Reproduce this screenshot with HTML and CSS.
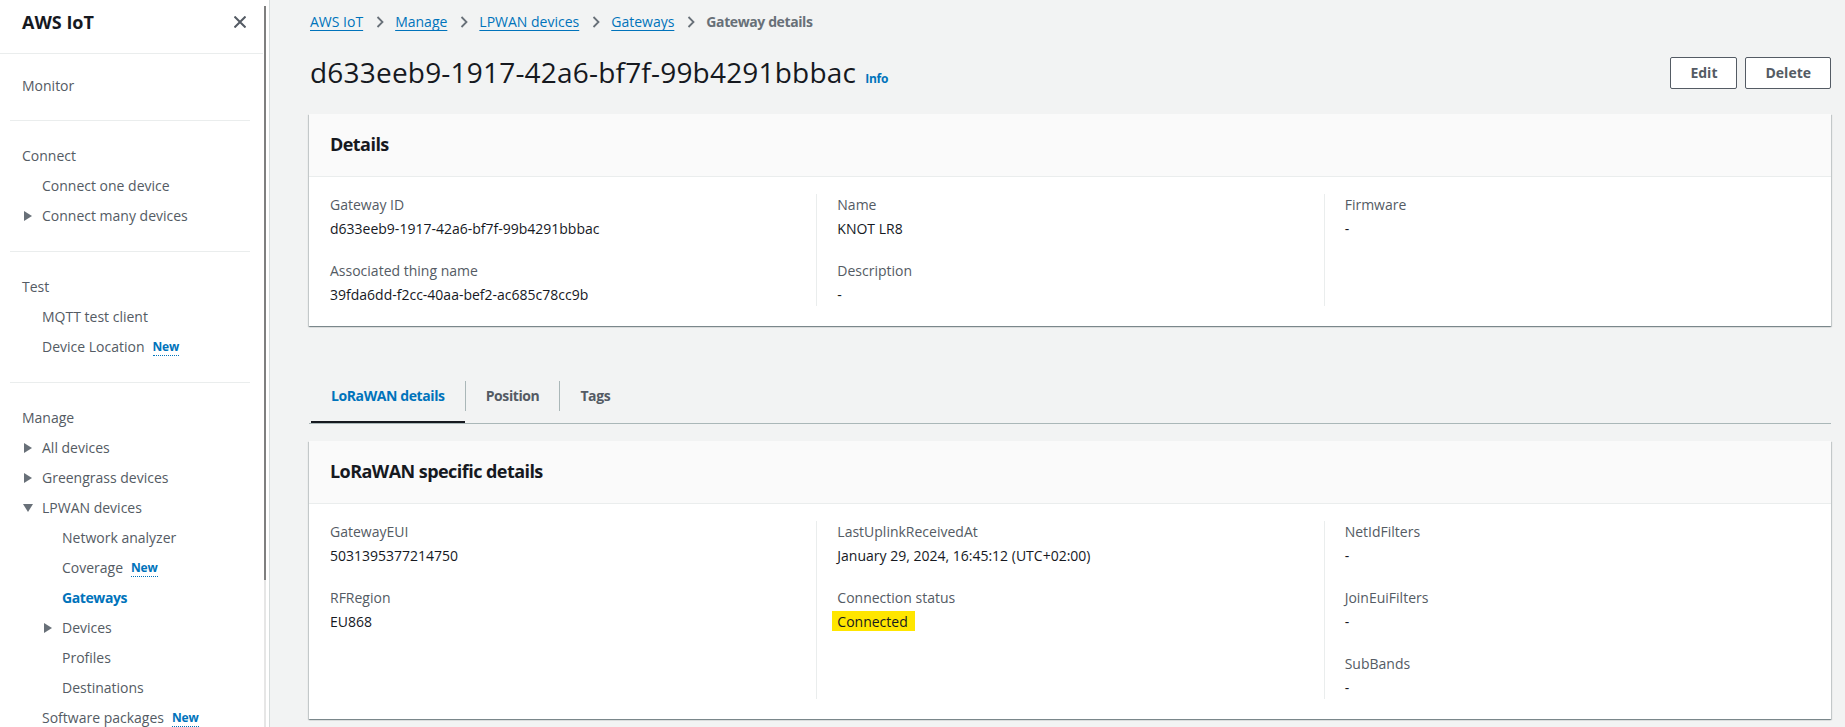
FILE: index.html
```html
<!DOCTYPE html>
<html lang="en">
<head>
<meta charset="utf-8">
<title>Gateway details</title>
<link rel="stylesheet" href="styles.css">
</head>
<body>
<div class="app">
  <aside class="nav">
    <div class="nav-head">
      <span class="nav-title">AWS IoT</span>
      <svg class="close" width="12" height="12" viewBox="0 0 12 12"><path d="M0.5 0.5 L11.5 11.5 M11.5 0.5 L0.5 11.5" stroke="#545b64" stroke-width="2" fill="none"/></svg>
    </div>
    <div class="nav-sec first">
      <div class="nav-h">Monitor</div>
    </div>
    <div class="nav-div"></div>
    <div class="nav-sec">
      <div class="nav-h">Connect</div>
      <div class="nav-i l1">Connect one device</div>
      <div class="nav-i l1"><svg class="caret" width="8" height="10" viewBox="0 0 8 10"><polygon points="0,0 8,5 0,10" fill="#687078"/></svg>Connect many devices</div>
    </div>
    <div class="nav-div"></div>
    <div class="nav-sec">
      <div class="nav-h">Test</div>
      <div class="nav-i l1">MQTT test client</div>
      <div class="nav-i l1">Device Location<span class="new">New</span></div>
    </div>
    <div class="nav-div"></div>
    <div class="nav-sec">
      <div class="nav-h">Manage</div>
      <div class="nav-i l1"><svg class="caret" width="8" height="10" viewBox="0 0 8 10"><polygon points="0,0 8,5 0,10" fill="#687078"/></svg>All devices</div>
      <div class="nav-i l1"><svg class="caret" width="8" height="10" viewBox="0 0 8 10"><polygon points="0,0 8,5 0,10" fill="#687078"/></svg>Greengrass devices</div>
      <div class="nav-i l1"><svg class="caret down" width="10" height="8" viewBox="0 0 10 8"><polygon points="0,0 10,0 5,8" fill="#687078"/></svg>LPWAN devices</div>
      <div class="nav-i l2">Network analyzer</div>
      <div class="nav-i l2">Coverage<span class="new">New</span></div>
      <div class="nav-i l2 active">Gateways</div>
      <div class="nav-i l2"><svg class="caret" width="8" height="10" viewBox="0 0 8 10"><polygon points="0,0 8,5 0,10" fill="#687078"/></svg>Devices</div>
      <div class="nav-i l2">Profiles</div>
      <div class="nav-i l2">Destinations</div>
      <div class="nav-i l1">Software packages<span class="new">New</span></div>
    </div>
    <div class="scroll-track"></div>
    <div class="scroll-thumb"></div>
  </aside>

  <main class="main">
    <nav class="crumbs">
      <a class="crumb">AWS IoT</a>
      <svg class="chev" width="8" height="12" viewBox="0 0 8 12"><path d="M1.5 1 L6.5 6 L1.5 11" stroke="#687078" stroke-width="1.8" fill="none"/></svg>
      <a class="crumb">Manage</a>
      <svg class="chev" width="8" height="12" viewBox="0 0 8 12"><path d="M1.5 1 L6.5 6 L1.5 11" stroke="#687078" stroke-width="1.8" fill="none"/></svg>
      <a class="crumb">LPWAN devices</a>
      <svg class="chev" width="8" height="12" viewBox="0 0 8 12"><path d="M1.5 1 L6.5 6 L1.5 11" stroke="#687078" stroke-width="1.8" fill="none"/></svg>
      <a class="crumb">Gateways</a>
      <svg class="chev" width="8" height="12" viewBox="0 0 8 12"><path d="M1.5 1 L6.5 6 L1.5 11" stroke="#687078" stroke-width="1.8" fill="none"/></svg>
      <span class="crumb-cur">Gateway details</span>
    </nav>

    <div class="page-head">
      <div class="title-wrap">
        <h1 class="title">d633eeb9-1917-42a6-bf7f-99b4291bbbac</h1>
        <a class="info">Info</a>
      </div>
      <div class="actions">
        <button class="btn">Edit</button>
        <button class="btn">Delete</button>
      </div>
    </div>

    <section class="card details">
      <div class="card-head">Details</div>
      <div class="card-body cols">
        <div class="col">
          <div class="field"><div class="label">Gateway ID</div><div class="value">d633eeb9-1917-42a6-bf7f-99b4291bbbac</div></div>
          <div class="field"><div class="label">Associated thing name</div><div class="value">39fda6dd-f2cc-40aa-bef2-ac685c78cc9b</div></div>
        </div>
        <div class="col">
          <div class="field"><div class="label">Name</div><div class="value">KNOT LR8</div></div>
          <div class="field"><div class="label">Description</div><div class="value">-</div></div>
        </div>
        <div class="col">
          <div class="field"><div class="label">Firmware</div><div class="value">-</div></div>
        </div>
      </div>
    </section>

    <div class="tabs">
      <div class="tab active">LoRaWAN details</div>
      <span class="tab-sep"></span>
      <div class="tab">Position</div>
      <span class="tab-sep"></span>
      <div class="tab">Tags</div>
    </div>

    <section class="card lora">
      <div class="card-head">LoRaWAN specific details</div>
      <div class="card-body cols">
        <div class="col">
          <div class="field"><div class="label">GatewayEUI</div><div class="value">5031395377214750</div></div>
          <div class="field"><div class="label">RFRegion</div><div class="value">EU868</div></div>
        </div>
        <div class="col">
          <div class="field"><div class="label">LastUplinkReceivedAt</div><div class="value">January 29, 2024, 16:45:12 (UTC+02:00)</div></div>
          <div class="field"><div class="label">Connection status</div><div class="value"><span class="hl">Connected</span></div></div>
        </div>
        <div class="col">
          <div class="field"><div class="label">NetIdFilters</div><div class="value">-</div></div>
          <div class="field"><div class="label">JoinEuiFilters</div><div class="value">-</div></div>
          <div class="field"><div class="label">SubBands</div><div class="value">-</div></div>
        </div>
      </div>
    </section>
  </main>
</div>
</body>
</html>
```

FILE: styles.css
```css
html, body {
  margin: 0;
  padding: 0;
}
body {
  font-family: "Open Sans", "Liberation Sans", sans-serif;
  font-size: 14px;
  line-height: 22px;
  color: #16191f;
  background: #f2f3f3;
}
.app {
  display: flex;
  height: 727px;
  overflow: hidden;
}

/* ---------- side navigation ---------- */
.nav {
  width: 270px;
  flex: none;
  box-sizing: border-box;
  background: #ffffff;
  border-right: 1px solid #d5dbdb;
  position: relative;
  color: #545b64;
}
.nav-head {
  height: 53px;
  border-bottom: 1px solid #eaeded;
  margin-right: 6px;
  display: flex;
  align-items: center;
  justify-content: space-between;
  padding: 0 17px 0 22px;
}
.nav-title {
  font-size: 18px;
  font-weight: 700;
  color: #16191f;
  margin-top: -9px;
}
.close {
  margin-top: -9px;
}
.nav-sec {
  padding: 20px 0;
}
.nav-sec.first {
  padding-top: 17px;
  padding-bottom: 19px;
}
.nav-div {
  height: 1px;
  background: #eaeded;
  margin-left: 10px;
  width: 240px;
}
.nav-h,
.nav-i {
  height: 30px;
  line-height: 30px;
  display: flex;
  align-items: center;
  white-space: nowrap;
}
.nav-h {
  padding-left: 22px;
}
.nav-i.l1 {
  padding-left: 42px;
}
.nav-i.l2 {
  padding-left: 62px;
}
.nav-i.active {
  color: #0073bb;
  font-weight: 700;
  letter-spacing: -0.4px;
}
.caret {
  margin-left: -18px;
  margin-right: 10px;
  flex: none;
}
.caret.down {
  margin-left: -19px;
  margin-right: 9px;
}
.new {
  font-size: 12px;
  font-weight: 700;
  color: #0073bb;
  margin-left: 8px;
  line-height: 16px;
  border-bottom: 1px dotted #0073bb;
  letter-spacing: -0.2px;
}
.scroll-track {
  position: absolute;
  top: 6px;
  bottom: 0;
  left: 264px;
  width: 2px;
  background: #e6e6e6;
}
.scroll-thumb {
  position: absolute;
  top: 6px;
  left: 264px;
  width: 2px;
  height: 574px;
  background: #7f7f7f;
}

/* ---------- main ---------- */
.main {
  flex: 1;
  min-width: 0;
  padding: 0 14px 0 39px;
}
.crumbs {
  margin-top: 11px;
  height: 22px;
  display: flex;
  align-items: center;
  padding-left: 1px;
}
.crumb {
  color: #0073bb;
  text-decoration: underline;
  text-underline-offset: 3px;
}
.chev {
  margin: 0 11px 0 13px;
  flex: none;
}
.crumb-cur {
  color: #687078;
  font-weight: 700;
  letter-spacing: -0.4px;
}
.page-head {
  margin-top: 21px;
  height: 36px;
  display: flex;
  align-items: center;
  justify-content: space-between;
}
.title-wrap {
  display: flex;
  align-items: baseline;
  padding-left: 1px;
}
.title {
  margin: 0;
  font-size: 28px;
  line-height: 36px;
  font-weight: 400;
  color: #16191f;
  letter-spacing: 0.2px;
}
.info {
  font-size: 12px;
  font-weight: 700;
  color: #0073bb;
  margin-left: 9px;
  letter-spacing: -0.2px;
}
.actions {
  display: flex;
  gap: 8px;
  margin-top: 2px;
}
.btn {
  font-family: inherit;
  font-size: 14px;
  font-weight: 700;
  color: #545b64;
  background: #ffffff;
  border: 1px solid #545b64;
  border-radius: 2px;
  height: 32px;
  padding: 0 19px;
  line-height: 22px;
}

/* ---------- cards ---------- */
.card {
  background: #ffffff;
  box-shadow: 0 1px 1px 0 rgba(0, 28, 36, 0.3), 1px 1px 1px 0 rgba(0, 28, 36, 0.15), -1px 1px 1px 0 rgba(0, 28, 36, 0.15);
}
.card.details {
  margin-top: 24px;
}
.card.lora {
  margin-top: 17px;
}
.card-head {
  background: #fafafa;
  border-bottom: 1px solid #eaeded;
  padding: 19px 20px 21px 21px;
  font-size: 18px;
  font-weight: 700;
  line-height: 22px;
  color: #16191f;
  letter-spacing: -0.55px;
}
.card-body {
  padding: 17px 0 20px;
}
.cols {
  display: grid;
  grid-template-columns: repeat(3, 1fr);
}
.col {
  padding: 0 20px 0 21px;
}
.col + .col {
  border-left: 1px solid #eaeded;
  padding-left: 20px;
}
.field + .field {
  margin-top: 20px;
}
.label {
  color: #545b64;
}
.value {
  color: #16191f;
  margin-top: 2px;
}
.hl {
  display: inline-block;
  background: #ffe600;
  line-height: 19px;
  padding: 1px 7px 0 5px;
  margin-left: -5px;
}

/* ---------- tabs ---------- */
.tabs {
  margin-top: 44px;
  display: flex;
  border-bottom: 1px solid #aab7b8;
  padding-left: 2px;
}
.tab {
  padding: 15px 20px 14px;
  border-bottom: 2px solid transparent;
  font-weight: 700;
  color: #545b64;
  white-space: nowrap;
  letter-spacing: -0.4px;
}
.tab.active {
  color: #0073bb;
  border-bottom-color: #16191f;
}
.tab-sep {
  width: 1px;
  height: 30px;
  background: #aab7b8;
  align-self: center;
  margin-bottom: 2px;
}
```
